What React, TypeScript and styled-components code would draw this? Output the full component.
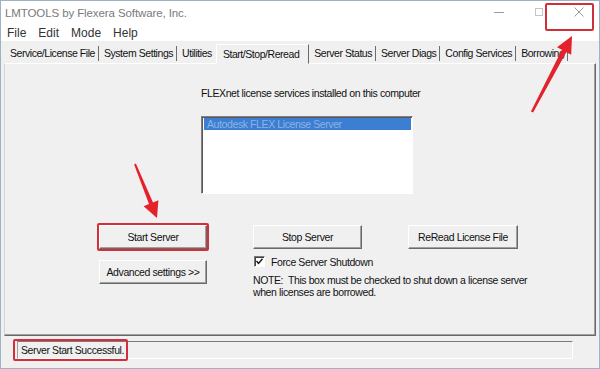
import React from "react";
import styled, { createGlobalStyle } from "styled-components";

const GlobalStyle = createGlobalStyle`
  html, body {
    margin: 0;
    padding: 0;
    background: #ffffff;
  }
  body {
    font-family: "Liberation Sans", Arial, sans-serif;
  }
`;

const Window = styled.div`
  position: relative;
  box-sizing: border-box;
  width: 600px;
  height: 369px;
  border: 1px solid #9fb1c4;
  background: #f0f0f0;
  display: flex;
  flex-direction: column;
  overflow: hidden;
`;

const TitleBar = styled.div`
  height: 23px;
  flex: none;
  display: flex;
  align-items: center;
  background: #ffffff;
  padding-left: 4px;
`;

const Title = styled.span`
  font-size: 11.5px;
  color: #7a7a7a;
  letter-spacing: -0.1px;
`;

const Controls = styled.div`
  margin-left: auto;
  display: flex;
  height: 100%;
`;

const CtrlButton = styled.div`
  width: 40px;
  display: flex;
  align-items: center;
  justify-content: center;
  padding-bottom: 2px;
`;

const MenuBar = styled.div`
  height: 17px;
  flex: none;
  display: flex;
  align-items: center;
  background: #ffffff;
`;

const MenuItem = styled.span`
  padding: 0 6px;
  font-size: 12px;
  color: #333333;
`;

const TabStrip = styled.div`
  height: 22px;
  flex: none;
  display: flex;
  align-items: flex-end;
  padding-left: 4px;
`;

const Tab = styled.div<{ $active?: boolean; $plain?: boolean }>`
  position: relative;
  box-sizing: border-box;
  font-size: 10.5px;
  letter-spacing: -0.45px;
  color: #111111;
  white-space: nowrap;
  ${({ $active, $plain }) =>
    $active
      ? `
    height: 20px;
    line-height: 18px;
    margin-bottom: -1px;
    padding: 0 9px 0 6px;
    border: 1px solid;
    border-color: #ffffff #696969 transparent #ffffff;
    background: #f0f0f0;
    z-index: 1;
  `
      : `
    height: 15px;
    line-height: 14px;
    margin-bottom: 2px;
    padding: 0 3px 0 5px;
    border-right: 1px solid ${$plain ? "transparent" : "#6d6d6d"};
  `}
`;

const Panel = styled.div`
  box-sizing: border-box;
  flex: none;
  height: 273px;
  margin: 0 3px;
  border: 1px solid;
  border-color: #ffffff #696969 #696969 #d4d4d4;
  box-shadow: inset -1px -1px #a0a0a0;
  font-size: 10.5px;
  letter-spacing: -0.4px;
  color: #111111;
`;

const Caption = styled.div`
  margin: 23px 0 0 196px;
  line-height: 13px;
`;

const ListBox = styled.div`
  box-sizing: border-box;
  width: 212px;
  height: 78px;
  margin: 16px 0 0 196px;
  background: #ffffff;
  border: 1px solid;
  border-color: #808080 #ffffff #ffffff #808080;
  box-shadow: inset 1px 1px #5a5a5a;
  padding: 1px 1px 0 2px;
`;

const ListRow = styled.div<{ $selected?: boolean }>`
  height: 12px;
  line-height: 12px;
  padding-left: 3px;
  background: ${({ $selected }) => ($selected ? "#3b7ed2" : "transparent")};
  color: ${({ $selected }) => ($selected ? "#8db3e2" : "#111111")};
  white-space: nowrap;
`;

const ButtonGrid = styled.div`
  display: grid;
  grid-template-columns: 108px 109px 110px;
  column-gap: 46px;
  row-gap: 4px;
  margin-top: 31px;
  padding-left: 94px;
  align-items: start;
`;

const Button = styled.div<{ $offset?: number }>`
  box-sizing: border-box;
  height: 24px;
  margin-top: ${({ $offset = 0 }) => $offset}px;
  display: flex;
  align-items: center;
  justify-content: center;
  background: #f0f0f0;
  border: 1px solid;
  border-color: #ffffff #696969 #696969 #ffffff;
  box-shadow: inset -1px -1px #a0a0a0;
  white-space: nowrap;
`;

const Options = styled.div`
  grid-column: 2 / span 2;
  padding-top: 3px;
  white-space: nowrap;
`;

const CheckRow = styled.label`
  display: flex;
  align-items: center;
  gap: 6px;
  height: 11px;
  padding-left: 1px;
`;

const CheckBox = styled.span`
  box-sizing: border-box;
  width: 11px;
  height: 11px;
  background: #ffffff;
  border: 1px solid;
  border-color: #7a7a7a #ffffff #ffffff #7a7a7a;
  box-shadow: inset 1px 1px #404040;
  display: flex;
  align-items: center;
  justify-content: center;
`;

const Note = styled.p`
  margin: 7px 0 0 0;
  line-height: 12px;
`;

const StatusArea = styled.div`
  flex: 1;
  padding: 5px 0 0 16px;
`;

const StatusField = styled.div`
  box-sizing: border-box;
  width: 556px;
  height: 18px;
  border: 1px solid;
  border-color: #7a7a7a #ffffff #ffffff #a0a0a0;
  display: flex;
  align-items: center;
  font-size: 10.5px;
  letter-spacing: -0.4px;
  color: #111111;
  padding-left: 3px;
`;

const Markup = styled.svg`
  position: absolute;
  left: -1px;
  top: -1px;
  pointer-events: none;
`;

const tabs = [
  "Service/License File",
  "System Settings",
  "Utilities",
  "Start/Stop/Reread",
  "Server Status",
  "Server Diags",
  "Config Services",
  "Borrowing",
];
const activeTab = 3;

const marks = [
  { x: 546, y: 4, w: 47, h: 26 },
  { x: 98, y: 224, w: 110, h: 26 },
  { x: 14, y: 340, w: 113, h: 20 },
];

const arrows = [
  "135.9,163.6 153.0,202.4 158.4,200.2 157,218 143.6,206.2 149.0,204.0 134.1,164.4",
  "533.1,112.6 566.3,52.2 571.2,54.7 572,36 557.0,47.3 561.9,49.8 530.9,111.4",
];

export default function App() {
  return (
    <>
      <GlobalStyle />
      <Window>
        <TitleBar>
          <Title>LMTOOLS by Flexera Software, Inc.</Title>
          <Controls>
            <CtrlButton>
              <svg width="10" height="10" viewBox="0 0 10 10">
                <line x1="0" y1="5.5" x2="10" y2="5.5" stroke="#9a9a9a" strokeWidth="1" />
              </svg>
            </CtrlButton>
            <CtrlButton>
              <svg width="10" height="10" viewBox="0 0 10 10">
                <rect x="1.5" y="1.5" width="7" height="7" fill="none" stroke="#c4c4c4" strokeWidth="1" />
              </svg>
            </CtrlButton>
            <CtrlButton>
              <svg width="10" height="10" viewBox="0 0 10 10">
                <path d="M0.5 0.5 L9.5 9.5 M9.5 0.5 L0.5 9.5" stroke="#9a9a9a" strokeWidth="1" />
              </svg>
            </CtrlButton>
          </Controls>
        </TitleBar>

        <MenuBar>
          <MenuItem>File</MenuItem>
          <MenuItem>Edit</MenuItem>
          <MenuItem>Mode</MenuItem>
          <MenuItem>Help</MenuItem>
        </MenuBar>

        <TabStrip>
          {tabs.map((t, i) => (
            <Tab key={t} $active={i === activeTab} $plain={i === activeTab - 1}>
              {t}
            </Tab>
          ))}
        </TabStrip>

        <Panel>
          <Caption>FLEXnet license services installed on this computer</Caption>
          <ListBox>
            <ListRow $selected>Autodesk FLEX License Server</ListRow>
          </ListBox>

          <ButtonGrid>
            <Button>Start Server</Button>
            <Button>Stop Server</Button>
            <Button>ReRead License File</Button>
            <Button $offset={7}>Advanced settings &gt;&gt;</Button>
            <Options>
              <CheckRow>
                <CheckBox>
                  <svg width="7" height="7" viewBox="0 0 7 7">
                    <path d="M0.5 3 L2.5 5.5 L6.5 0.8" fill="none" stroke="#111" strokeWidth="1.4" />
                  </svg>
                </CheckBox>
                Force Server Shutdown
              </CheckRow>
              <Note>
                NOTE:&nbsp; This box must be checked to shut down a license server
                <br />
                when licenses are borrowed.
              </Note>
            </Options>
          </ButtonGrid>
        </Panel>

        <StatusArea>
          <StatusField>Server Start Successful.</StatusField>
        </StatusArea>

        <Markup width="600" height="369" viewBox="0 0 600 369">
          {marks.map((m, i) => (
            <rect
              key={i}
              x={m.x}
              y={m.y}
              width={m.w}
              height={m.h}
              rx="1"
              fill="none"
              stroke="#d22f3b"
              strokeWidth="2"
            />
          ))}
          {arrows.map((p, i) => (
            <polygon key={i} points={p} fill="#e3222c" />
          ))}
        </Markup>
      </Window>
    </>
  );
}
